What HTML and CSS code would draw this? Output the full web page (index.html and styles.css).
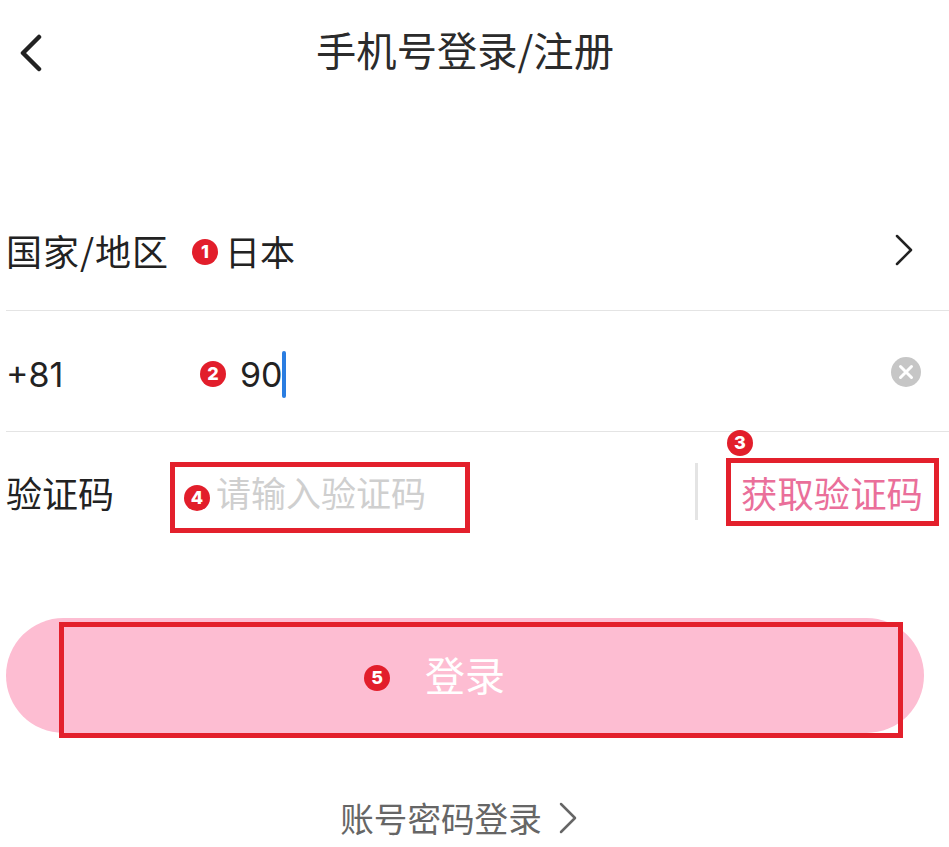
FILE: index.html
```html
<!DOCTYPE html>
<html lang="zh-CN">
<head>
    <meta charset="UTF-8">
    <meta name="viewport" content="width=device-width, initial-scale=1.0">
    <title>手机号登录/注册</title>
    <link rel="stylesheet" href="styles.css">
</head>
<body>
    <div class="page">
        <div class="header">
            <svg class="back" width="26" height="38" viewBox="0 0 26 38">
                <path d="M21 3 L5 19 L21 35" />
            </svg>
            <h1 class="title">手机号登录/注册</h1>
        </div>

        <div class="form">
            <div class="row row-country">
                <span class="label label-country">国家/地区</span>
                <span class="value value-country">日本</span>
                <svg class="arrow" width="19" height="32" viewBox="0 0 19 32">
                    <path d="M2 2 L16 16 L2 30" />
                </svg>
            </div>
            <div class="row row-phone">
                <span class="label num">+81</span>
                <span class="value value-phone num">90</span>
                <span class="caret"></span>
                <svg class="clear" width="30" height="30" viewBox="0 0 30 30">
                    <circle cx="15" cy="15" r="15" />
                    <path d="M9.5 9.5 L20.5 20.5 M20.5 9.5 L9.5 20.5" />
                </svg>
            </div>
            <div class="row row-code">
                <span class="label">验证码</span>
                <span class="value value-code">请输入验证码</span>
                <span class="sep"></span>
                <span class="get-code">获取验证码</span>
            </div>
        </div>

        <button class="login">登录</button>

        <div class="alt-login">
            <span>账号密码登录</span>
            <svg class="alt-arrow" width="19" height="32" viewBox="0 0 19 32">
                <path d="M2 2 L16 16 L2 30" />
            </svg>
        </div>

        <!-- annotations drawn on top of the screenshot -->
        <span class="badge badge-1">1</span>
        <span class="badge badge-2">2</span>
        <span class="badge badge-3">3</span>
        <span class="badge badge-4">4</span>
        <span class="badge badge-5">5</span>
        <div class="mark mark-code"></div>
        <div class="mark mark-get"></div>
        <div class="mark mark-login"></div>
    </div>
</body>
</html>
```

FILE: styles.css
```css
* {
    box-sizing: border-box;
}
html, body {
    margin: 0;
    background: #fff;
}
body {
    font-family: "Noto Sans CJK SC", sans-serif;
    color: #222;
}
.page {
    position: relative;
    width: 949px;
    height: 847px;
    overflow: hidden;
}

.header {
    display: grid;
    grid-template-columns: 1fr auto 1fr;
    align-items: center;
    width: 930px;
    height: 106px;
}
.back {
    margin-left: 18px;
}
.back path {
    fill: none;
    stroke: #222;
    stroke-width: 4.5;
    stroke-linecap: round;
    stroke-linejoin: round;
}
.title {
    margin: 0 0 8px;
    font-size: 40.3px;
    font-weight: 400;
    line-height: 48px;
    color: #2b2b2b;
}

.form {
    margin-top: 84px;
    margin-left: 6px;
}
.row {
    display: flex;
    align-items: center;
    height: 121px;
    border-bottom: 1px solid #e4e4e4;
    font-size: 36px;
}
.row-phone {
    padding-top: 6px;
}
.row-code {
    height: 126px;
    padding-bottom: 7px;
    border-bottom: none;
}
.label {
    flex: none;
    width: 180px;
}
.label-country {
    letter-spacing: 1px;
}
.num {
    font-family: Inter, sans-serif;
    font-size: 34px;
}
.value-country {
    margin-left: 39px;
    font-size: 35px;
}
.value-phone {
    margin-left: 54px;
}
.value-code {
    margin-left: 30px;
    font-size: 35px;
    color: #cfcfcf;
}
.caret {
    width: 4px;
    height: 47px;
    margin-left: -1px;
    border-radius: 2px;
    background: #2a7de1;
}
.arrow {
    margin-left: auto;
    margin-right: 35px;
}
.arrow path, .alt-arrow path {
    fill: none;
    stroke: #222;
    stroke-width: 2.5;
    stroke-linecap: round;
    stroke-linejoin: round;
}
.clear {
    margin-left: auto;
    margin-right: 28px;
    margin-bottom: 4px;
}
.clear circle {
    fill: #c6c6c6;
}
.clear path {
    fill: none;
    stroke: #fff;
    stroke-width: 3;
    stroke-linecap: round;
}
.sep {
    width: 3px;
    height: 57px;
    margin-left: auto;
    margin-right: 43px;
    background: #e4e4e4;
}
.get-code {
    margin-right: 26px;
    font-size: 36.4px;
    color: #ea6f9a;
}

.login {
    display: block;
    width: 918px;
    height: 115px;
    margin: 60px 0 0 6px;
    padding: 0 0 4px;
    border: none;
    border-radius: 58px;
    background: #fdbdd2;
    color: #fff;
    font-family: inherit;
    font-size: 40px;
}

.alt-login {
    display: flex;
    align-items: center;
    justify-content: center;
    gap: 17px;
    width: 906px;
    margin: 60px 0 0 6px;
    font-size: 33.6px;
    color: #666;
}
.alt-arrow path {
    stroke: #666;
}

.badge {
    position: absolute;
    width: 26px;
    height: 26px;
    border-radius: 50%;
    background: #e21e2b;
    color: #fff;
    font-family: Inter, sans-serif;
    font-size: 18px;
    font-weight: 800;
    line-height: 26px;
    text-align: center;
}
.badge-1 { left: 192px; top: 239px; }
.badge-2 { left: 200px; top: 361px; }
.badge-3 { left: 727px; top: 430px; }
.badge-4 { left: 184px; top: 485px; }
.badge-5 { left: 364px; top: 665px; }

.mark {
    position: absolute;
    border: 5px solid #e3202c;
}
.mark-code { left: 170px; top: 462px; width: 300px; height: 71px; }
.mark-get { left: 726px; top: 458px; width: 213px; height: 68px; }
.mark-login { left: 59px; top: 622px; width: 844px; height: 116px; }
```
